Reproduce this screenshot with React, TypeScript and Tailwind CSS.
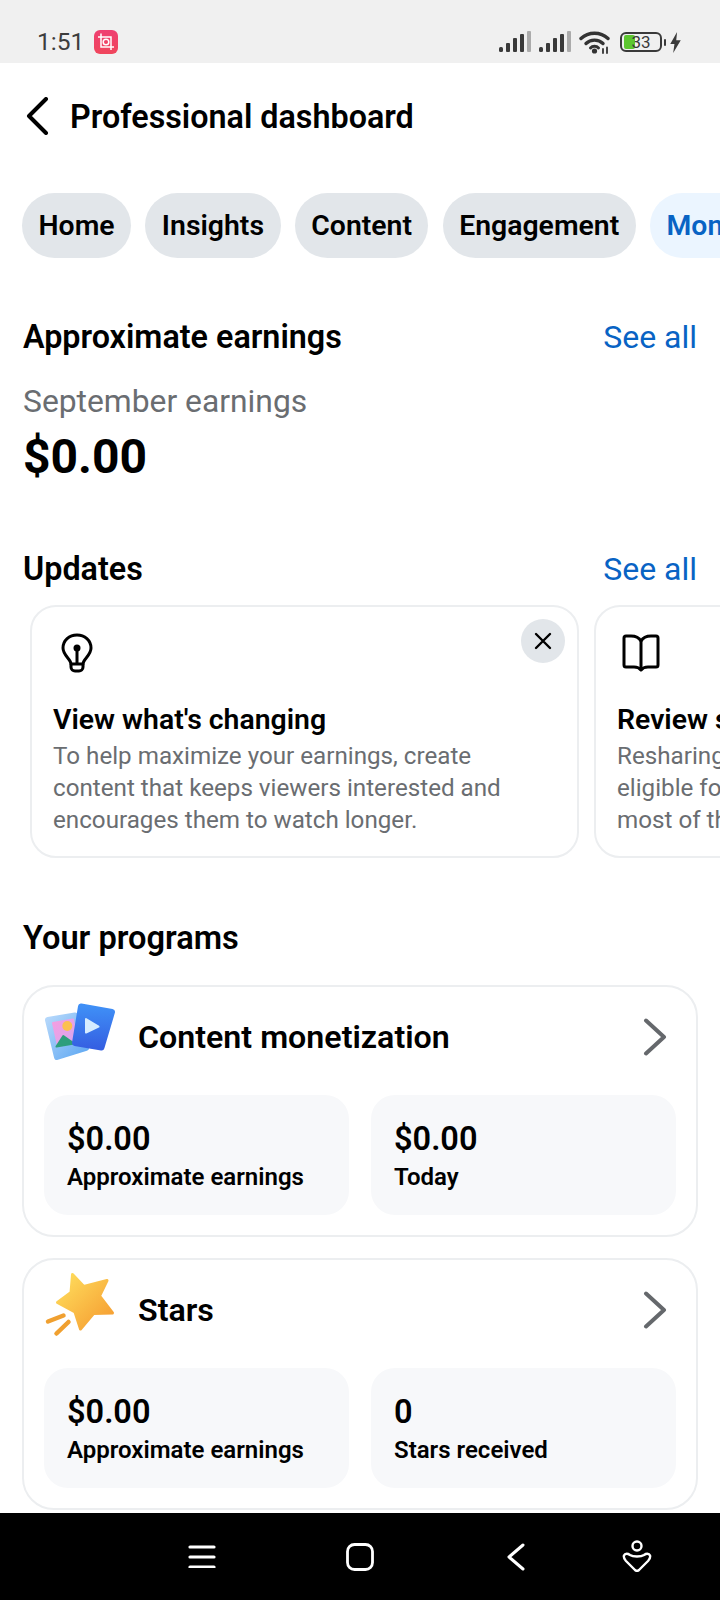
import React from "react";

const Signal = () => (
  <svg width="32" height="22" viewBox="0 0 32 22">
    <rect x="0" y="16" width="4" height="5" rx="1.5" fill="#3a3a3a" />
    <rect x="7" y="12" width="4" height="9" rx="1" fill="#3a3a3a" />
    <rect x="14" y="7" width="4" height="14" rx="1" fill="#3a3a3a" />
    <rect x="21" y="3" width="4" height="18" rx="1" fill="#3a3a3a" />
    <rect x="28" y="0" width="4" height="21" rx="1" fill="#ababab" />
  </svg>
);

const StatusIcons = () => (
  <div className="flex items-center">
    <Signal />
    <div className="ml-[8px]">
      <Signal />
    </div>
    <svg className="ml-[8px]" width="32" height="24" viewBox="0 0 32 24" fill="none" stroke="#333" strokeLinecap="round">
      <path d="M2 8.500C9.500 1.500 21.500 1.500 29 8.500" strokeWidth="3.400" />
      <path d="M7 13.500C11.500 9 19.500 9 24 13.500" strokeWidth="3.400" />
      <path d="M11.500 18C13.500 15.800 17.500 15.800 19.500 18" strokeWidth="3" />
      <circle cx="15.500" cy="21" r="2.600" fill="#333" stroke="none" />
      <path d="M24 19v4M28 17.500v5.500" strokeWidth="1.800" />
    </svg>
    <div className="ml-[9px] relative w-[42px] h-[20px] rounded-[6px] border-2 border-[#3a3a3a] overflow-hidden">
      <div className="ml-[2px] mt-[1px] w-[11px] h-[14px] rounded-[2px] bg-[#5cc62f]" />
      <span className="absolute inset-0 flex items-center justify-center text-[17px] leading-none text-[#3a3a3a]">33</span>
    </div>
    <div className="ml-[2px] w-[2px] h-[7px] rounded-sm bg-[#3a3a3a]" />
    <svg className="ml-[4px]" width="11" height="21" viewBox="0 0 10 20">
      <path d="M6.500 0 L0 11.500 H4 L2.800 20 L10 7.800 H5.700 Z" fill="#3a3a3a" />
    </svg>
  </div>
);

const AppBadge = () => (
  <div className="ml-[10px] w-[24px] h-[24px] rounded-[6px] bg-gradient-to-b from-[#ef3f71] to-[#f0465c] flex items-center justify-center">
    <svg width="18" height="18" viewBox="0 0 18 18" fill="none" stroke="#fff" strokeWidth="1.500">
      <path d="M4 0.500V14H17" />
      <path d="M1 4H14V17" />
      <circle cx="9" cy="9" r="2.800" />
    </svg>
  </div>
);

const Pill = ({ label, active }: { label: string; active?: boolean }) => (
  <div
    className={
      active
        ? "shrink-0 h-[65px] px-[16.5px] pt-[1px] rounded-full bg-[#ebf5ff] text-[#0863c4] text-[28.4px] font-semibold flex items-center"
        : "shrink-0 h-[65px] px-[16.5px] pt-[1px] rounded-full bg-[#e2e6ea] text-black text-[28.4px] font-semibold flex items-center"
    }
  >
    {label}
  </div>
);

const SectionHead = ({ title }: { title: string }) => (
  <div className="flex items-center justify-between pl-[23px] pr-[23px] h-[40px]">
    <div className="text-[32.3px] font-semibold text-black leading-none">{title}</div>
    <div className="text-[32px] text-[#0863c4] leading-none">See all</div>
  </div>
);

const Stat = ({ value, label }: { value: string; label: string }) => (
  <div className="flex-1 h-[120px] rounded-[24px] bg-[#f7f8fa] pl-[23px] pt-[26px]">
    <div className="text-[32.5px] leading-[36px] font-semibold text-black">{value}</div>
    <div className="text-[24px] leading-[30px] mt-[5px] font-semibold text-black">{label}</div>
  </div>
);

const Chevron = () => (
  <svg width="24" height="38" viewBox="0 0 24 38" fill="none" stroke="#65686c" strokeWidth="4" strokeLinecap="round" strokeLinejoin="round">
    <path d="M3 2.500L21 19L3 35.500" />
  </svg>
);

const ContentIcon = () => (
  <svg width="80" height="65" viewBox="0 0 80 65" className="shrink-0 -mt-[9px]">
    <defs>
      <linearGradient id="cb" x1="0" y1="0" x2="1" y2="1">
        <stop offset="0" stopColor="#b6d8fb" />
        <stop offset="1" stopColor="#5fa8f2" />
      </linearGradient>
      <linearGradient id="cp" x1="0" y1="0" x2="1" y2="1">
        <stop offset="0" stopColor="#f59ee0" />
        <stop offset="1" stopColor="#d6a6f0" />
      </linearGradient>
      <linearGradient id="cf" x1="0.500" y1="0" x2="0.500" y2="1">
        <stop offset="0" stopColor="#3f8ff6" />
        <stop offset="1" stopColor="#3560e2" />
      </linearGradient>
    </defs>
    <path d="M8 20L35 15.500L46 48L17 57Z" fill="url(#cb)" stroke="url(#cb)" strokeWidth="6" strokeLinejoin="round" />
    <path d="M13 23L33 19.500L37 42L18 46Z" fill="url(#cp)" stroke="url(#cp)" strokeWidth="2" strokeLinejoin="round" />
    <circle cx="27.300" cy="26" r="5" fill="#fcc04f" />
    <path d="M16.500 46.500L23.300 36L34 43.500Z" fill="#2e9e7c" stroke="#2e9e7c" strokeWidth="2" strokeLinejoin="round" />
    <path d="M41 6.500L72 12L61.500 47.500L35 43Z" fill="url(#cf)" stroke="url(#cf)" strokeWidth="6" strokeLinejoin="round" />
    <path d="M46 19L58.500 26.700L46 32.500Z" fill="#d6ecff" stroke="#d6ecff" strokeWidth="2" strokeLinejoin="round" />
  </svg>
);

const StarIcon = () => (
  <svg width="80" height="70" viewBox="0 0 80 70" className="shrink-0 -mt-[12px]">
    <defs>
      <linearGradient id="st" x1="0" y1="0" x2="1" y2="1">
        <stop offset="0" stopColor="#ffe15f" />
        <stop offset="1" stopColor="#f5982e" />
      </linearGradient>
    </defs>
    <path
      d="M32.500 5.500L43.800 17.500L67 11.500L59.500 27L72.500 44L53.500 44.500L40.500 60L35 43L17.500 33.500L31 23.500Z"
      fill="url(#st)"
      stroke="url(#st)"
      strokeWidth="3"
      strokeLinejoin="round"
    />
    <path d="M8 52.500L23.500 46.500M16.500 64.500L28.500 53" stroke="#f0a030" strokeWidth="4.500" strokeLinecap="round" fill="none" />
  </svg>
);

const Program = ({
  icon,
  title,
  stats,
}: {
  icon: React.ReactNode;
  title: string;
  stats: [string, string][];
}) => (
  <div className="shrink-0 ml-[22px] mr-[22px] h-[252px] rounded-[32px] border-2 border-[#eceef0] bg-white">
    <div className="h-[108px] flex items-center pl-[16px] pr-[29px] pb-[8px]">
      {icon}
      <div className="ml-[18px] flex-1 text-[32.2px] font-semibold text-black">{title}</div>
      <Chevron />
    </div>
    <div className="flex gap-[22px] px-[20px]">
      {stats.map(([v, l]) => (
        <Stat key={l} value={v} label={l} />
      ))}
    </div>
  </div>
);

const UpdateCard = ({
  icon,
  title,
  lines,
  close,
}: {
  icon: React.ReactNode;
  title: string;
  lines: string[];
  close?: boolean;
}) => (
  <div className="relative shrink-0 w-[549px] h-[253px] rounded-[26px] border-2 border-[#eceef0] bg-white pl-[21px]">
    <div className="h-[26px]" />
    <div className="h-[40px] flex items-center">{icon}</div>
    {close && (
      <div className="absolute top-[12px] right-[12px] w-[44px] h-[44px] rounded-full bg-[#e2e6ea] flex items-center justify-center">
        <svg width="18" height="18" viewBox="0 0 18 18" stroke="#000" strokeWidth="2.400" strokeLinecap="round">
          <path d="M2 2L16 16M16 2L2 16" />
        </svg>
      </div>
    )}
    <div className="mt-[30px] text-[28.4px] leading-[34px] font-semibold text-black whitespace-nowrap">{title}</div>
    <div className="text-[24.2px] leading-[32px] text-[#6a6d71] whitespace-nowrap mt-[3px]">
      {lines.map((l) => (
        <div key={l}>{l}</div>
      ))}
    </div>
  </div>
);

const Bulb = () => (
  <svg width="32" height="40" viewBox="0 0 32 40" fill="none" stroke="#000" strokeWidth="3" strokeLinecap="round" strokeLinejoin="round" className="ml-[8px]">
    <path d="M10 31C10 26 2 22.500 2 15C2 7.300 8.300 2 16 2C23.700 2 30 7.300 30 15C30 22.500 22 26 22 31Z" />
    <path d="M10 31V34C10 36.500 12 38 14 38H18C20 38 22 36.500 22 34V31" />
    <path d="M16 17V30" />
    <circle cx="16" cy="15" r="3.500" fill="#000" stroke="none" />
  </svg>
);

const Book = () => (
  <svg width="38" height="38" viewBox="0 0 38 38" fill="none" stroke="#000" strokeWidth="3" strokeLinejoin="round" strokeLinecap="round" className="ml-[5px]">
    <path d="M19 7C17 3.500 13 2 9 2H4C2.800 2 2 2.800 2 4V31C2 32.200 2.800 33 4 33H12C15 33 17.500 34 19 36C20.500 34 23 33 26 33H34C35.200 33 36 32.200 36 31V4C36 2.800 35.200 2 34 2H29C25 2 21 3.500 19 7Z" />
    <path d="M19 7V35" />
  </svg>
);

const Nav = () => (
  <div className="shrink-0 h-[87px] bg-black flex items-start pt-[30px]">
    <svg width="28" height="24" viewBox="0 0 28 24" className="ml-[188px] mt-[1px]" stroke="#fff" strokeWidth="3.200" strokeLinecap="round">
      <path d="M2 3H26M2 13H26M2 23H26" />
    </svg>
    <svg width="28" height="28" viewBox="0 0 28 28" className="ml-[130px]" fill="none" stroke="#fff" strokeWidth="2.800">
      <rect x="1.500" y="1.500" width="25" height="25" rx="7" />
    </svg>
    <svg width="20" height="28" viewBox="0 0 20 28" className="ml-[132px]" fill="none" stroke="#fff" strokeWidth="3" strokeLinecap="round" strokeLinejoin="round">
      <path d="M17 2L3 14L17 26" />
    </svg>
    <svg width="30" height="32" viewBox="0 0 30 32" className="ml-[96px] -mt-[3px]" fill="none" stroke="#fff" strokeWidth="2.400" strokeLinejoin="round">
      <circle cx="15" cy="6" r="4.500" />
      <path d="M2 15.500C3 13 6 13.500 8 15C11 17 19 17 22 15C24 13.500 27 13 28 15.500C28.800 17.500 27.500 19 26 21L17 30C15.800 31 14.200 31 13 30L4 21C2.500 19 1.200 17.500 2 15.500Z" />
    </svg>
  </div>
);

export default function App() {
  return (
    <div className="w-[720px] h-[1600px] overflow-hidden flex flex-col bg-white [font-family:Roboto,'Liberation_Sans',sans-serif]">
      <div className="shrink-0 h-[63px] bg-[#f0f0f0] flex items-center pt-[21px] pl-[37px] pr-[39px]">
        <span className="text-[24.5px] leading-none text-[#3d3d3d]">1:51</span>
        <AppBadge />
        <div className="flex-1" />
        <StatusIcons />
      </div>
      <div className="flex-1 min-h-0 overflow-hidden flex flex-col">
        <div className="shrink-0 h-[106px] flex items-center pl-[26px]">
          <svg width="24" height="38" viewBox="0 0 24 38" fill="none" stroke="#000" strokeWidth="4" strokeLinecap="round" strokeLinejoin="round">
            <path d="M20 2L3 19L20 36" />
          </svg>
          <div className="ml-[20px] mt-[2px] text-[32.3px] font-semibold text-black leading-none">Professional dashboard</div>
        </div>
        <div className="shrink-0 mt-[24px] flex gap-[14.25px] pl-[22px] overflow-hidden">
          <Pill label="Home" />
          <Pill label="Insights" />
          <Pill label="Content" />
          <Pill label="Engagement" />
          <Pill label="Monetization" active />
        </div>
        <div className="shrink-0 mt-[59px]">
          <SectionHead title="Approximate earnings" />
        </div>
        <div className="shrink-0 mt-[24px] pl-[23px] text-[31.8px] leading-[40px] text-[#6a6d71]">September earnings</div>
        <div className="shrink-0 mt-[8px] pl-[23px] text-[48px] leading-[56px] font-bold text-black">$0.00</div>
        <div className="shrink-0 mt-[64px]">
          <SectionHead title="Updates" />
        </div>
        <div className="shrink-0 mt-[16px] flex gap-[15px] pl-[30px] overflow-hidden">
          <UpdateCard
            icon={<Bulb />}
            title="View what's changing"
            close
            lines={[
              "To help maximize your earnings, create",
              "content that keeps viewers interested and",
              "encourages them to watch longer.",
            ]}
          />
          <UpdateCard
            icon={<Book />}
            title="Review sharing guidelines"
            lines={["Resharing content may not be", "eligible for monetization. Make the", "most of the content you post."]}
          />
        </div>
        <div className="shrink-0 mt-[60px] pl-[23px] text-[32.6px] leading-[40px] font-semibold text-black">Your programs</div>
        <div className="shrink-0 mt-[27px] flex flex-col gap-[21px]">
          <Program
            icon={<ContentIcon />}
            title="Content monetization"
            stats={[
              ["$0.00", "Approximate earnings"],
              ["$0.00", "Today"],
            ]}
          />
          <Program
            icon={<StarIcon />}
            title="Stars"
            stats={[
              ["$0.00", "Approximate earnings"],
              ["0", "Stars received"],
            ]}
          />
        </div>
      </div>
      <Nav />
    </div>
  );
}
